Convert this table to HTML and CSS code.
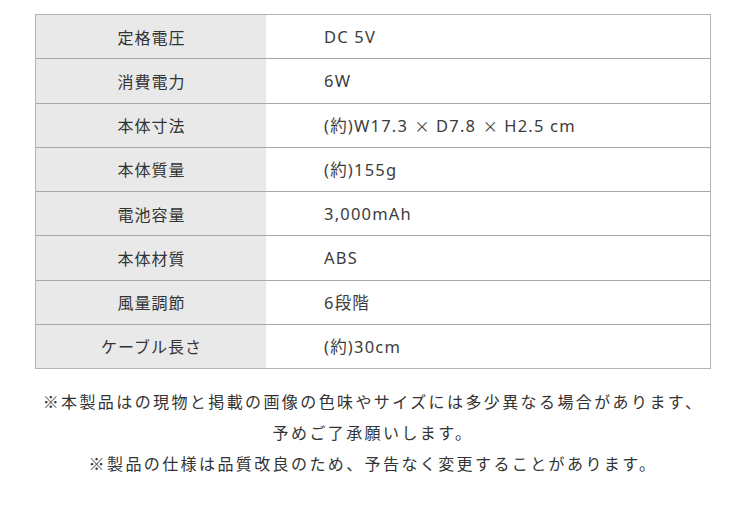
FILE: index.html
```html
<!DOCTYPE html>
<html lang="ja">
<head>
<meta charset="utf-8">
<link rel="stylesheet" href="styles.css">
</head>
<body>
<div class="page">
  <div class="spec">
    <div class="row"><div class="label">定格電圧</div><div class="value">DC 5V</div></div>
    <div class="row"><div class="label">消費電力</div><div class="value">6W</div></div>
    <div class="row"><div class="label">本体寸法</div><div class="value">(約)W17.3 <span class="times">×</span> D7.8 <span class="times">×</span> H2.5 cm</div></div>
    <div class="row"><div class="label">本体質量</div><div class="value">(約)155g</div></div>
    <div class="row"><div class="label">電池容量</div><div class="value">3,000mAh</div></div>
    <div class="row"><div class="label">本体材質</div><div class="value">ABS</div></div>
    <div class="row"><div class="label">風量調節</div><div class="value">6段階</div></div>
    <div class="row"><div class="label">ケーブル長さ</div><div class="value">(約)30cm</div></div>
  </div>
  <div class="notes">
    <p>※本製品はの現物と掲載の画像の色味やサイズには多少異なる場合があります、</p>
    <p>予めご了承願いします。</p>
    <p>※製品の仕様は品質改良のため、予告なく変更することがあります。</p>
  </div>
</div>
</body>
</html>
```
FILE: styles.css
```css
html, body {
  margin: 0;
  padding: 0;
  background: #fff;
}
body {
  font-family: "Noto Sans", "Noto Sans CJK JP", sans-serif;
  color: #333;
}
.page {
  width: 746px;
  padding-top: 14px;
}
.spec {
  margin-left: 35px;
  width: 674px;
  border: 1px solid #b4b4b4;
}
.row {
  display: grid;
  grid-template-columns: 230px 1fr;
  height: 43.25px;
  border-top: 1px solid #a8a8a8;
}
.row:first-child {
  border-top: none;
}
.label {
  background: #e9e9e9;
  display: flex;
  align-items: center;
  justify-content: center;
  font-family: "Noto Sans CJK JP", sans-serif;
  font-size: 16px;
  letter-spacing: 1px;
  padding-left: 1px;
}
.value {
  display: flex;
  align-items: center;
  padding-left: 58px;
  font-size: 16.5px;
  letter-spacing: 1.2px;
  color: #3c3c3c;
  white-space: pre;
}
.times {
  font-family: "Noto Sans CJK JP", sans-serif;
  font-size: 15px;
  letter-spacing: 0;
  margin: 0 1px;
}
.notes {
  margin-top: 17px;
  text-align: center;
  font-family: "Noto Sans CJK JP", sans-serif;
  font-size: 16px;
  letter-spacing: 2.4px;
  line-height: 31px;
}
.notes p {
  margin: 0;
}
```
